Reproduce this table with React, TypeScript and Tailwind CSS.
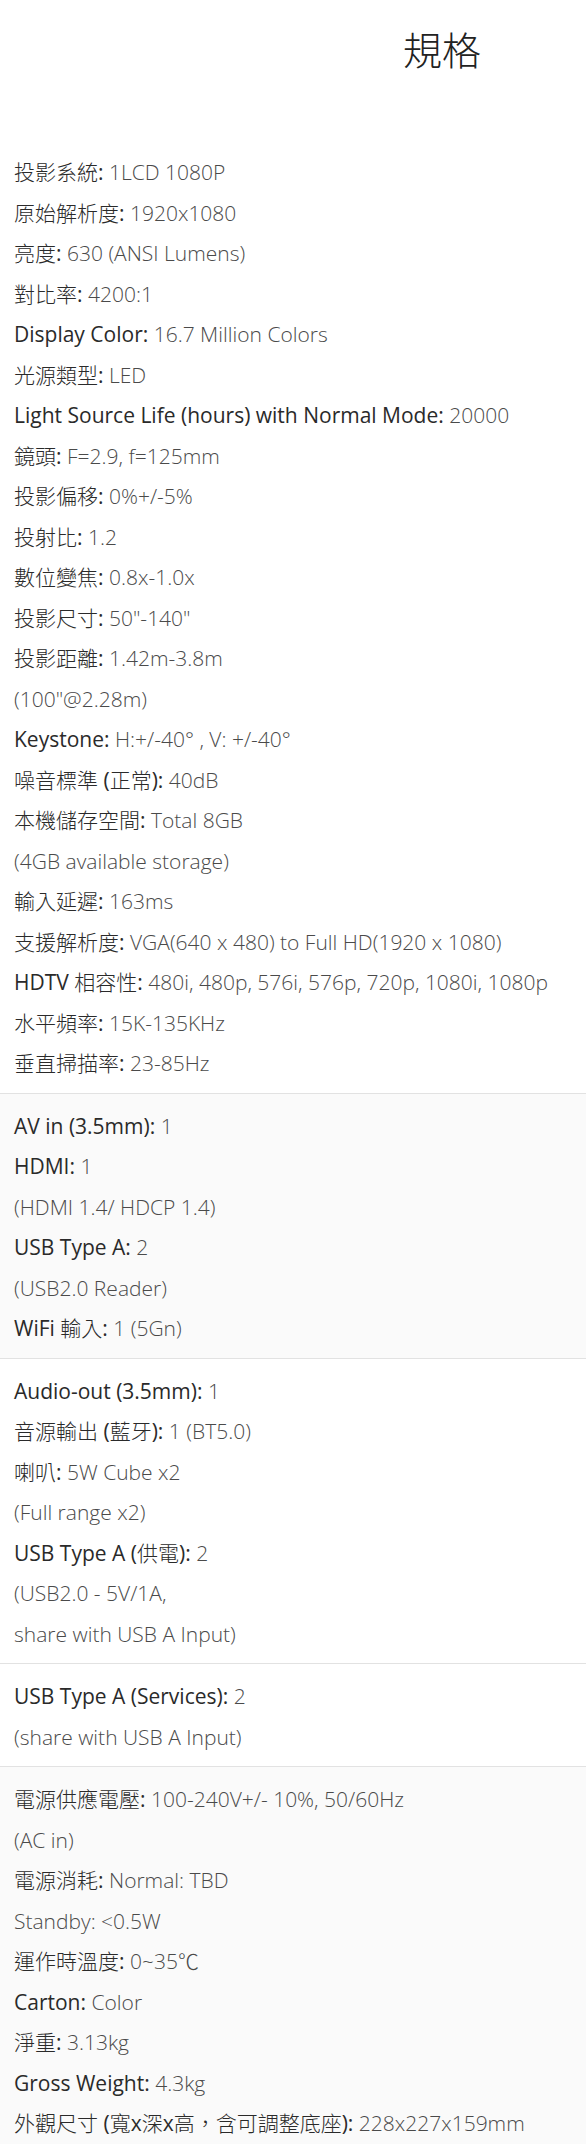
type Spec = { label?: string; value?: string };

const sections: { bg: string; rows: Spec[] }[] = [
  {
    bg: 'bg-white',
    rows: [
      { label: '投影系統', value: '1LCD 1080P' },
      { label: '原始解析度', value: '1920x1080' },
      { label: '亮度', value: '630 (ANSI Lumens)' },
      { label: '對比率', value: '4200:1' },
      { label: 'Display Color', value: '16.7 Million Colors' },
      { label: '光源類型', value: 'LED' },
      { label: 'Light Source Life (hours) with Normal Mode', value: '20000' },
      { label: '鏡頭', value: 'F=2.9, f=125mm' },
      { label: '投影偏移', value: '0%+/-5%' },
      { label: '投射比', value: '1.2' },
      { label: '數位變焦', value: '0.8x-1.0x' },
      { label: '投影尺寸', value: '50"-140"' },
      { label: '投影距離', value: '1.42m-3.8m' },
      { value: '(100"@2.28m)' },
      { label: 'Keystone', value: 'H:+/-40° , V: +/-40°' },
      { label: '噪音標準 (正常)', value: '40dB' },
      { label: '本機儲存空間', value: 'Total 8GB' },
      { value: '(4GB available storage)' },
      { label: '輸入延遲', value: '163ms' },
      { label: '支援解析度', value: 'VGA(640 x 480) to Full HD(1920 x 1080)' },
      { label: 'HDTV 相容性', value: '480i, 480p, 576i, 576p, 720p, 1080i, 1080p' },
      { label: '水平頻率', value: '15K-135KHz' },
      { label: '垂直掃描率', value: '23-85Hz' },
    ],
  },
  {
    bg: 'bg-[#fafafa]',
    rows: [
      { label: 'AV in (3.5mm)', value: '1' },
      { label: 'HDMI', value: '1' },
      { value: '(HDMI 1.4/ HDCP 1.4)' },
      { label: 'USB Type A', value: '2' },
      { value: '(USB2.0 Reader)' },
      { label: 'WiFi 輸入', value: '1 (5Gn)' },
    ],
  },
  {
    bg: 'bg-white',
    rows: [
      { label: 'Audio-out (3.5mm)', value: '1' },
      { label: '音源輸出 (藍牙)', value: '1 (BT5.0)' },
      { label: '喇叭', value: '5W Cube x2' },
      { value: '(Full range x2)' },
      { label: 'USB Type A (供電)', value: '2' },
      { value: '(USB2.0 - 5V/1A,' },
      { value: 'share with USB A Input)' },
    ],
  },
  {
    bg: 'bg-white',
    rows: [
      { label: 'USB Type A (Services)', value: '2' },
      { value: '(share with USB A Input)' },
    ],
  },
  {
    bg: 'bg-[#fafafa]',
    rows: [
      { label: '電源供應電壓', value: '100-240V+/- 10%, 50/60Hz' },
      { value: '(AC in)' },
      { label: '電源消耗', value: 'Normal: TBD' },
      { value: 'Standby: <0.5W' },
      { label: '運作時溫度', value: '0~35℃' },
      { label: 'Carton', value: 'Color' },
      { label: '淨重', value: '3.13kg' },
      { label: 'Gross Weight', value: '4.3kg' },
      { label: '外觀尺寸 (寬x深x高，含可調整底座)', value: '228x227x159mm' },
    ],
  },
];

// CJK glyphs in labels render heavier than the reference, so thin them out
function Label({ text }: { text: string }) {
  const parts = text.split(/([\u3000-\u9fff\uff00-\uffef]+)/);
  return (
    <span className="text-[#2a2a2a]">
      {parts.map((p, i) =>
        /[\u3000-\u9fff\uff00-\uffef]/.test(p) ? (
          <span key={i} className="font-light">{p}</span>
        ) : (
          <span key={i} className="font-normal">{p}</span>
        ),
      )}
      <span className="font-normal">: </span>
    </span>
  );
}

function SpecRow({ label, value }: Spec) {
  return (
    <p className="leading-[40.5px] text-[21px] whitespace-nowrap">
      {label && <Label text={label} />}
      <span className="text-[#4a4a4a] font-light">{value}</span>
    </p>
  );
}

export default function App() {
  return (
    <div className="w-[586px] min-h-[2144px] bg-white font-['Open_Sans','Noto_Sans_CJK_TC',sans-serif]">
      <div className="h-[140px] pt-[22px] pl-[403px]">
        <h2 className="text-[39px] leading-[56px] font-light text-[#222]">規格</h2>
      </div>
      {sections.map((section, i) => (
        <div
          key={i}
          className={`${section.bg} ${i > 0 ? 'border-t border-[#e2e2e2]' : ''} pl-[14px] pt-[12px] pb-[9px]`}
        >
          {section.rows.map((row, j) => (
            <SpecRow key={j} {...row} />
          ))}
        </div>
      ))}
    </div>
  );
}
